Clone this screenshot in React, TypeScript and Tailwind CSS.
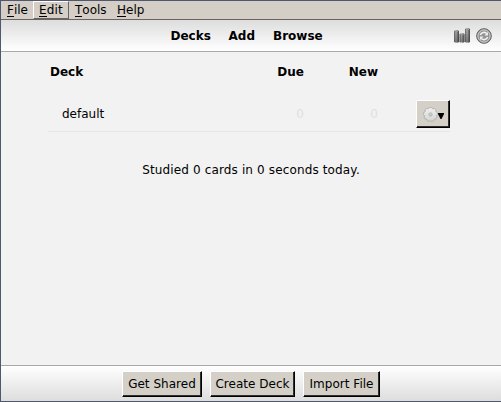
import React from 'react';

const menus = [
  { name: 'File', box: 'w-[32px] pl-[5px] border-transparent' },
  { name: 'Edit', box: 'w-[36px] pl-[5px] tracking-[0.15px] border-t-white border-l-white border-r-[#686462] border-b-[#686462]' },
  { name: 'Tools', box: 'w-[41px] pl-[5px] border-transparent' },
  { name: 'Help', box: 'w-[42px] pl-[6px] border-transparent' },
];

const raised = 'flex items-center justify-center border border-t-white border-l-white border-r-black border-b-black bg-[#d4d0c8] shadow-[inset_-1px_-1px_0_#302e2c]';

const actions = [
  { label: 'Get Shared', width: 'w-[80px]' },
  { label: 'Create Deck', width: 'w-[85px]' },
  { label: 'Import File', width: 'w-[77px]' },
];

function StatsIcon() {
  return (
    <svg width="16" height="16" viewBox="0 0 16 16" className="block">
      <defs>
        <linearGradient id="bar">
          <stop offset="0" stopColor="#666" />
          <stop offset=".4" stopColor="#b5b5b5" />
          <stop offset="1" stopColor="#444" />
        </linearGradient>
        <linearGradient id="shade" x2="0" y2="1">
          <stop offset="0" stopColor="#333" stopOpacity="0" />
          <stop offset="1" stopColor="#333" stopOpacity=".4" />
        </linearGradient>
      </defs>
      <path d="M0 3q2.5-2 5 0v11q-2.5 2-5 0z" fill="url(#bar)" />
      <path d="M5.5 6q2.5-2 5 0v8q-2.5 2-5 0z" fill="url(#bar)" />
      <path d="M11 1q2.5-2 5 0v13q-2.5 2-5 0z" fill="url(#bar)" />
      <path d="M0 3h5v11H0zM5.5 6h5v8h-5zM11 1h5v13h-5z" fill="url(#shade)" />
      <path d="M1 3.5h3M6.5 6.5h3M12 1.5h3" stroke="#999" />
    </svg>
  );
}

function SyncIcon() {
  return (
    <svg width="16" height="16" viewBox="0 0 17 17" className="block">
      <circle cx="8.5" cy="8.5" r="7.8" fill="#888" stroke="#5c5c5c" />
      <circle cx="8.5" cy="8.5" r="6.5" fill="#929292" stroke="#d8d8d8" strokeWidth="1" />
      <path d="M4.6 7.4a4.1 4.1 0 0 1 6.8-1.5M12.4 9.6a4.1 4.1 0 0 1-6.8 1.5" fill="none" stroke="#f0f0f0" strokeWidth="1.7" />
      <path d="M12.7 4.3v3.8H9zM4.3 12.7V8.9H8z" fill="#f0f0f0" />
    </svg>
  );
}

function GearIcon() {
  return (
    <svg width="15" height="15" viewBox="0 0 14 14" className="block shrink-0">
      <defs>
        <linearGradient id="gear" x2="0" y2="1">
          <stop offset="0" stopColor="#f0f0ee" />
          <stop offset="1" stopColor="#d2d4d4" />
        </linearGradient>
      </defs>
      <path
        d="M5 1.7 5.8.5h2.4L9 1.7l1.5-.4 1.6 1.4-.2 1.5 1.3.8.4 2-1.1 1 .5 1.4-1 1.8-1.5.2-.4 1.4-1.9.7L7 12.5l-1.2 1-1.9-.7-.4-1.4-1.5-.2-1-1.8.5-1.4L.4 7l.4-2 1.3-.8-.2-1.5 1.6-1.4z"
        fill="url(#gear)" stroke="#a6a7a6" strokeWidth=".7"
      />
      <circle cx="7" cy="7" r="1.5" fill="#d4d2cc" stroke="#a6a7a6" strokeWidth=".8" />
    </svg>
  );
}

export default function App() {
  return (
    <div className="flex h-[402px] w-[501px] flex-col overflow-hidden border-t border-b border-l border-[#505870] bg-[#f2f2f2] font-['DejaVu_Sans',sans-serif] text-[12px] leading-[14px] text-black">
      <nav className="flex h-[19px] shrink-0 border-b border-[#686462] bg-[#d4cec7]">
        {menus.map(({ name, box }) => (
          <div key={name} className={`h-[18px] border pt-[1px] whitespace-nowrap ${box}`}>
            <span className="inline-block h-[14px] border-b border-black align-top leading-[14px]">{name[0]}</span>{name.slice(1)}
          </div>
        ))}
      </nav>

      <header className="grid h-[32px] shrink-0 grid-cols-[169px_1fr_48px] items-center border-b border-[#a8a8a8] bg-linear-to-b from-[#dddddd] to-white">
        <div />
        <div className="flex gap-[18px] pl-[0.5px] font-bold">
          <span>Decks</span>
          <span className="-ml-[0.3px]">Add</span>
          <span>Browse</span>
        </div>
        <div className="flex items-center gap-[6px] pl-px">
          <StatsIcon />
          <SyncIcon />
        </div>
      </header>

      <main className="flex flex-1 flex-col">
        <div className="ml-[47px] w-[402px] pt-[13px]">
          <div className="grid grid-cols-[1fr_74px_74px_72px] font-bold">
            <span className="pl-[2px]">Deck</span>
            <span className="text-right">Due</span>
            <span className="text-right">New</span>
          </div>
          <div className="mt-[21px] grid h-[32px] grid-cols-[1fr_74px_74px_72px] border-b border-[#e6e6e6]">
            <span className="pt-[7px] pl-[14px]">default</span>
            <span className="pt-[7px] text-right text-[#e0e0e0]">0</span>
            <span className="pt-[7px] text-right text-[#e0e0e0]">0</span>
            <button className={`${raised} ml-auto h-[28px] w-[34px] pl-px`}>
              <GearIcon />
              <svg width="6" height="6" viewBox="0 0 6 6" className="mt-[3px] shrink-0"><path d="M0 0h6v1L3.5 6h-1L0 1z" /></svg>
            </button>
          </div>
        </div>
        <p className="mt-[31px] text-center tracking-[0.14px]">Studied 0 cards in 0 seconds today.</p>
      </main>

      <footer className="flex h-[36px] shrink-0 justify-center gap-[8px] border-t border-[#a8a8a8] bg-linear-to-b from-white to-[#dddddd] pt-[5px]">
        {actions.map(({ label, width }) => (
          <button key={label} className={`${raised} ${width} h-[26px] tracking-[0.03px] whitespace-nowrap`}>{label}</button>
        ))}
      </footer>
    </div>
  );
}
